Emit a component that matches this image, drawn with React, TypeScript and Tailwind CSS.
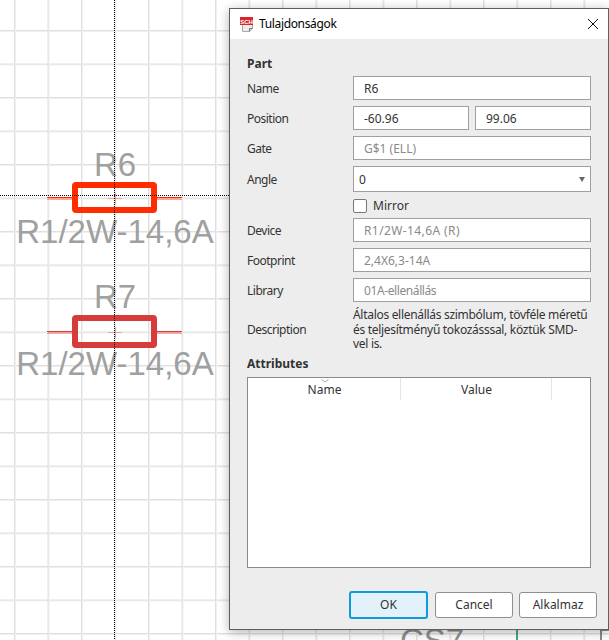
import type { ReactNode } from 'react';

const sans = 'font-["Noto_Sans",sans-serif]';

const Field = ({ value, muted = false, tracking = '' }: { value: string; muted?: boolean; tracking?: string }) => (
  <div
    className={`flex h-6 flex-1 items-center border border-[#a0a0a0] bg-white pl-[10px] pt-px ${muted ? 'text-[#8a8a8a]' : 'text-[#333]'} ${tracking}`}
  >
    {value}
  </div>
);

const Row = ({ label, children }: { label: string; children: ReactNode }) => (
  <div className="flex items-center">
    <div className="w-[106px] shrink-0 pt-px tracking-[-0.5px] text-[#333]">{label}</div>
    <div className="flex flex-1 gap-[6px]">{children}</div>
  </div>
);

const Resistor = ({ top, color, boxH, lead }: { top: number; color: string; boxH: number; lead: number }) => (
  <svg className="absolute left-[40px]" style={{ top }} width="150" height="40" viewBox="0 0 150 40">
    <path d={`M7 ${lead - 0.5}H33M117 ${lead - 0.5}H142`} stroke={color} strokeWidth="1" />
    <path d={`M8 ${lead + 0.5}H33M117 ${lead + 0.5}H141`} stroke="#f7a08a" strokeWidth="1" />
    <path d={`M7 ${lead + 1.5}H33M117 ${lead + 1.5}H142`} stroke={color} strokeOpacity="0.4" strokeWidth="1" />
    <path d={`M68 ${lead + 0.5}H82M75.5 ${lead - 5}V${lead + 6}`} stroke={color} strokeOpacity="0.35" strokeWidth="1" />
    <rect x="35" y="3" width="79" height={boxH} rx="1" fill="none" stroke={color} strokeWidth="6" strokeLinejoin="round" />
  </svg>
);

const SymbolText = ({ name, textTop }: { name: string; textTop: number }) => (
  <div
    className='absolute left-0 w-[230px] text-center font-["Liberation_Sans",sans-serif] text-[33px] leading-[38px] text-[#a0a0a0]'
    style={{ top: textTop }}
  >
    <div>{name}</div>
    <div className="mt-[29px]">R1/2W-14,6A</div>
  </div>
);

const Button = ({ label, primary = false }: { label: string; primary?: boolean }) => (
  <div
    className={
      primary
        ? 'mr-px flex h-7 w-[79px] items-center justify-center rounded-[3px] border-2 border-[#0f9bd7] bg-[#e3f2fa] text-[#333]'
        : 'flex h-[26px] w-[78px] items-center justify-center rounded-[3px] border border-[#8f8f8f] bg-white text-[#333]'
    }
  >
    {label}
  </div>
);

const App = () => {
  return (
    <div className="relative h-[640px] w-[609px] overflow-hidden bg-white">
      {/* schematic canvas */}
      <div className="absolute inset-0 bg-[linear-gradient(to_right,#e0e0e0_1px,#f0f0f0_1px,#f0f0f0_2px,transparent_2px),linear-gradient(to_bottom,#e0e0e0_1px,#f0f0f0_1px,#f0f0f0_2px,transparent_2px)] bg-[size:33.5px_33.5px] bg-[position:14px_-3.5px]" />

      <SymbolText name="R6" textTop={146} />
      <SymbolText name="R7" textTop={278} />
      <Resistor top={182} color="#ff2d00" boxH={25} lead={16} />
      <Resistor top={315} color="#d63c3c" boxH={27} lead={17} />

      <div className='absolute left-[400px] top-[622px] font-["Liberation_Sans",sans-serif] text-[33px] leading-[38px] text-[#8f8f8f]'>
        CS7
      </div>
      <div className="absolute left-[516px] top-[625px] h-[15px] w-[2px] bg-[#3fa98c]" />
      <div className="absolute left-[600px] top-[625px] h-[15px] w-[2px] bg-[#8a8a8a]" />
      <div className="absolute left-[600px] top-[629px] h-[2px] w-[9px] bg-[#8a8a8a]" />

      {/* crosshair */}
      <div className="absolute left-[114px] top-0 h-full w-px bg-[repeating-linear-gradient(to_bottom,#000_0,#000_1px,transparent_1px,transparent_2px)]" />
      <div className="absolute left-0 top-[195px] h-px w-[230px] bg-[repeating-linear-gradient(to_right,#000_0,#000_1px,transparent_1px,transparent_2px)]" />

      {/* properties dialog */}
      <div
        className={`absolute left-[229px] top-2 flex h-[622px] w-[380px] flex-col border border-[#5f5f5f] bg-[#ededed] text-[12px] leading-4 shadow-[0_2px_10px_rgba(0,0,0,0.3)] ${sans}`}
      >
        <div className="flex h-[30px] shrink-0 items-center bg-white pl-[10px] pr-[9px]">
          <svg width="14" height="16" viewBox="0 0 14 16" className="shrink-0">
            <path d="M2.5 8H12.5V12.5L9.5 15.5H2.5Z" fill="#ececec" stroke="#a8a8a8" />
            <path d="M9.5 15.5V12.5H12.5" fill="none" stroke="#777" />
            <rect x="0" y="1" width="13" height="8" fill="#d9262b" />
            <text x="6.5" y="7.5" textAnchor="middle" fontSize="6" fontWeight="700" fill="#fff" fontFamily="Liberation Sans, sans-serif">
              SCH
            </text>
          </svg>
          <span className="ml-[5px] tracking-[-0.35px] text-black">Tulajdonságok</span>
          <svg className="ml-auto" width="12" height="12" viewBox="0 0 12 12">
            <path d="M1 1L11 11M11 1L1 11" stroke="#111" strokeWidth="1" />
          </svg>
        </div>

        <div className="flex flex-1 flex-col px-[17px]">
          <div className="mt-[17px] font-bold text-[#333]">Part</div>
          <div className="mt-[4px] flex flex-col gap-[6px]">
            <Row label="Name"><Field value="R6" /></Row>
            <Row label="Position"><Field value="-60.96" /><Field value="99.06" /></Row>
            <Row label="Gate"><Field value="G$1 (ELL)" muted /></Row>
            <Row label="Angle">
              <div className="flex h-[26px] flex-1 items-center justify-between border border-[#a0a0a0] bg-white pl-[5px] pr-[5px] pt-px text-[#333]">
                0
                <svg width="6" height="5" viewBox="0 0 6 5"><path d="M0 0H6L3 5Z" fill="#666" /></svg>
              </div>
            </Row>
          </div>
          <div className="ml-[106px] mt-[6px] flex h-[14px] items-center gap-[6px] pt-px text-[#333]">
            <div className="h-[14px] w-[14px] rounded-[2px] border border-[#777] bg-white" />
            Mirror
          </div>
          <div className="mt-[6px] flex flex-col gap-[6px]">
            <Row label="Device"><Field value="R1/2W-14,6A (R)" muted tracking="tracking-[0.4px]" /></Row>
            <Row label="Footprint"><Field value="2,4X6,3-14A" muted /></Row>
            <Row label="Library"><Field value="01A-ellenállás" muted tracking="tracking-[-0.4px]" /></Row>
            <Row label="Description">
              <div className="min-w-0 flex-1 whitespace-nowrap leading-[14.5px] tracking-[-0.3px] text-[#333]">
                Általos ellenállás szimbólum, tövféle méretű
                <br />
                és teljesítményű tokozásssal, köztük SMD-
                <br />
                vel is.
              </div>
            </Row>
          </div>
          <div className="mt-[4px] font-bold text-[#333]">Attributes</div>
          <div className="mt-[5px] h-[191px] border border-[#8a8a8a] bg-white">
            <div className="relative flex h-[22px] text-[#333]">
              <svg className="absolute left-[73px] top-px" width="8" height="4" viewBox="0 0 8 4">
                <path d="M0.5 0.5L4 3L7.5 0.5" fill="none" stroke="#aaa" />
              </svg>
              <div className="flex w-[153px] items-center justify-center border-r border-[#e5e5e5] pl-px pt-[2px]">Name</div>
              <div className="flex w-[151px] items-center justify-center border-r border-[#e5e5e5] pl-px pt-[2px]">Value</div>
            </div>
          </div>
          <div className="-mr-[6px] mt-[23px] flex items-center justify-end gap-[6px]">
            <Button label="OK" primary />
            <Button label="Cancel" />
            <Button label="Alkalmaz" />
          </div>
        </div>
      </div>
    </div>
  );
};

export default App;
